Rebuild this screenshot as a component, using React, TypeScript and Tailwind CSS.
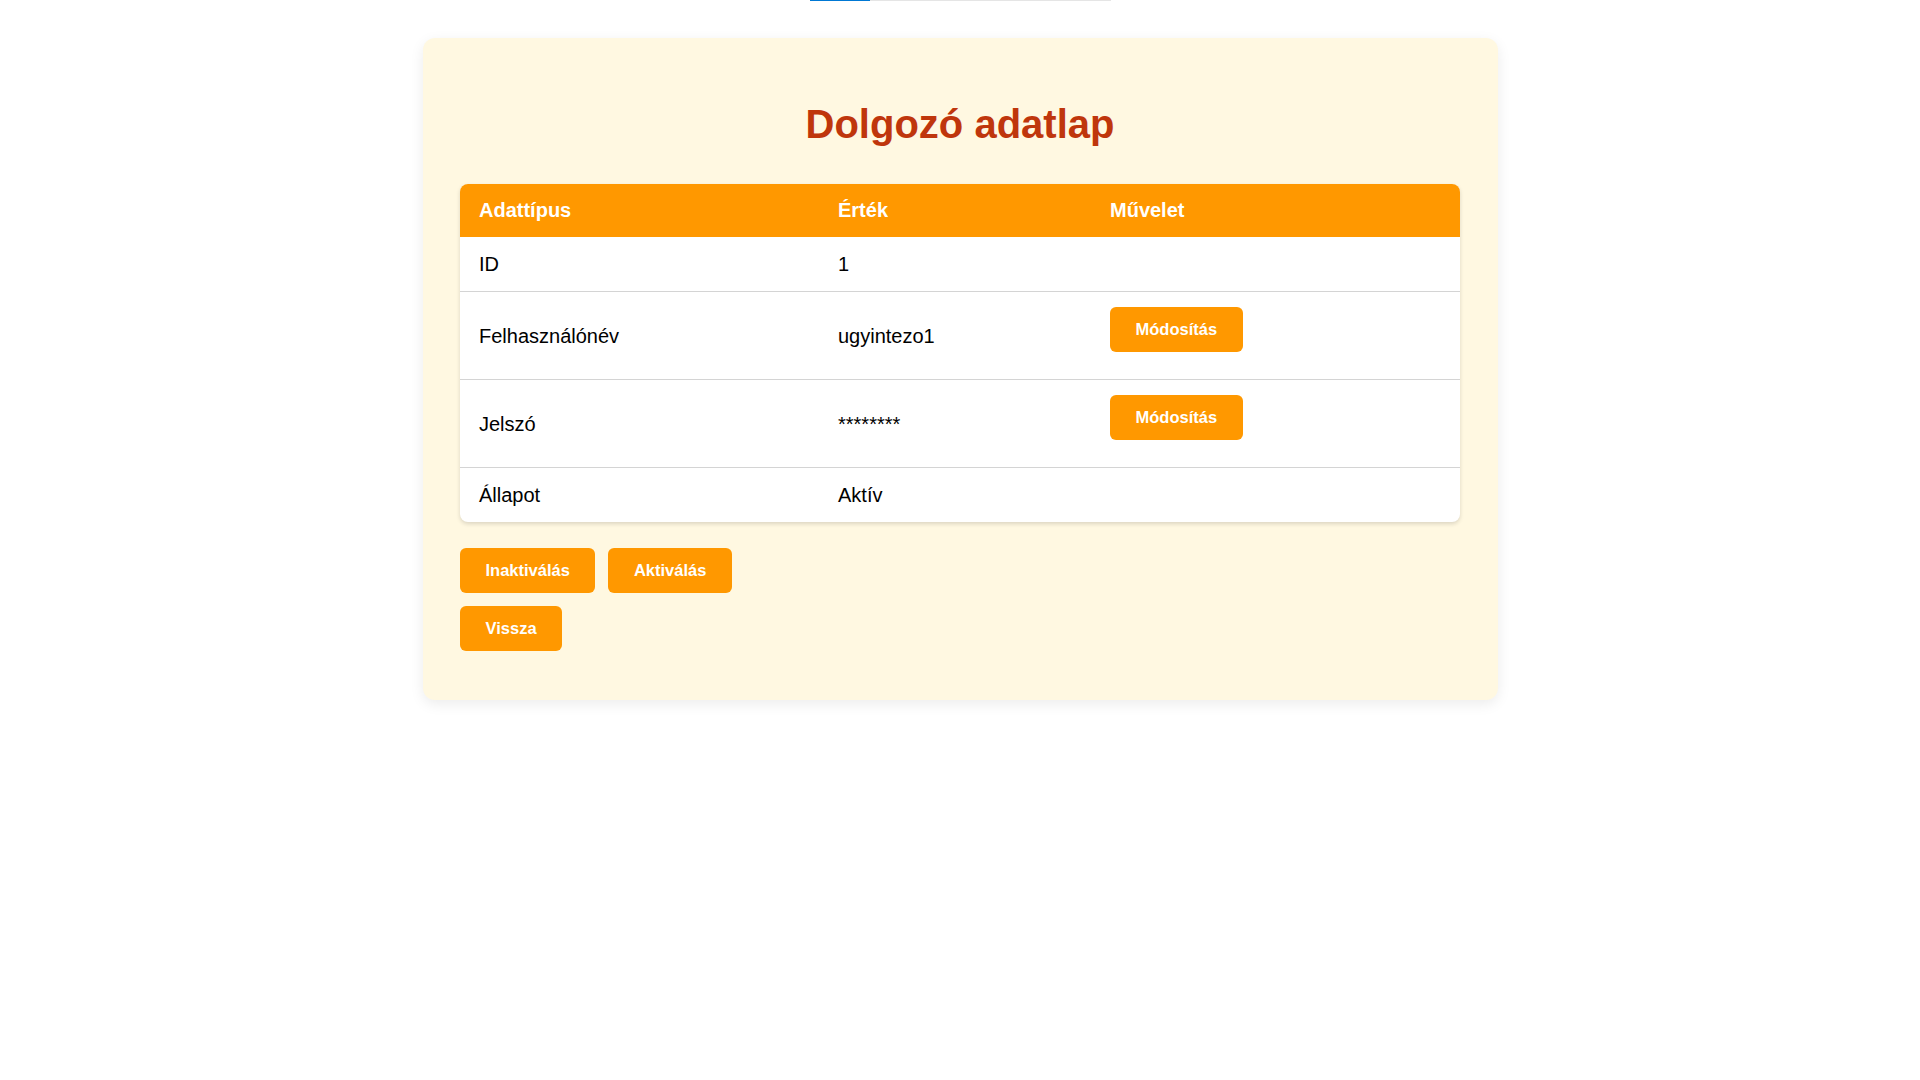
const rows = [
  { label: "ID", value: "1", editable: false },
  { label: "Felhasználónév", value: "ugyintezo1", editable: true },
  { label: "Jelszó", value: "********", editable: true },
  { label: "Állapot", value: "Aktív", editable: false },
];

function OrangeButton({ children }: { children: string }) {
  return (
    <button className="inline-flex h-[45px] items-center justify-center rounded-[6px] bg-[#ff9800] px-[25.5px] text-[16.5px] font-bold text-white">
      {children}
    </button>
  );
}

export default function App() {
  return (
    <div className="min-h-screen bg-white font-['Liberation_Sans',Arial,sans-serif] text-black">
      {/* top progress strip */}
      <div className="flex justify-center">
        <div className="flex h-px w-[301px]">
          <div className="w-[60px] bg-[#0078d4]" />
          <div className="flex-1 bg-[#e5e5e5]" />
        </div>
      </div>

      <div className="mx-auto mt-[37px] w-[1075px] rounded-[12px] bg-[#fff8e1] px-[37.5px] pt-[63px] pb-[49px] shadow-[0_4px_14px_rgba(0,0,0,0.08)]">
        <h1 className="mb-[37px] text-center text-[40px] leading-[46px] font-bold text-[#bf360c]">
          Dolgozó adatlap
        </h1>

        <div className="overflow-hidden rounded-[8px] bg-white shadow-[0_2px_4px_rgba(0,0,0,0.14)]">
          <table className="w-[1000px] table-fixed border-collapse text-left">
            <colgroup>
              <col className="w-[359px]" />
              <col className="w-[272px]" />
              <col className="w-[369px]" />
            </colgroup>
            <thead>
              <tr className="bg-[#ff9800] text-white">
                <th className="px-[19px] py-[15px] text-[20px] leading-[23px] font-bold">Adattípus</th>
                <th className="px-[19px] py-[15px] text-[20px] leading-[23px] font-bold">Érték</th>
                <th className="px-[19px] py-[15px] text-[20px] leading-[23px] font-bold">Művelet</th>
              </tr>
            </thead>
            <tbody>
              {rows.map((r, i) => (
                <tr key={r.label} className={i > 0 ? "border-t border-[#d4d4d4]" : ""}>
                  <td className="px-[19px] py-[15px] align-middle text-[20px] leading-[24px]">{r.label}</td>
                  <td className="px-[19px] py-[15px] align-middle text-[20px] leading-[24px]">{r.value}</td>
                  <td
                    className={
                      r.editable
                        ? "px-[19px] pt-[15px] pb-[27px] align-top"
                        : "px-[19px] py-[15px] align-middle text-[20px] leading-[24px]"
                    }
                  >
                    {r.editable && <OrangeButton>Módosítás</OrangeButton>}
                  </td>
                </tr>
              ))}
            </tbody>
          </table>
        </div>

        <div className="mt-[26px] flex gap-[13px]">
          <OrangeButton>Inaktiválás</OrangeButton>
          <OrangeButton>Aktiválás</OrangeButton>
        </div>
        <div className="mt-[13px] flex">
          <OrangeButton>Vissza</OrangeButton>
        </div>
      </div>
    </div>
  );
}
